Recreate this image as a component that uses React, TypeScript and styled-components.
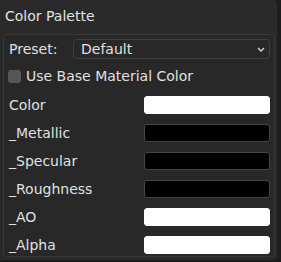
import React from "react";
import styled, { createGlobalStyle } from "styled-components";

const Global = createGlobalStyle`
  html, body { margin: 0; padding: 0; background: #1d1d1d; }
  body { font-family: "DejaVu Sans", "Liberation Sans", sans-serif; font-size: 14px; }
`;

const Panel = styled.div`
  width: 277px;
  height: 260px;
  box-sizing: border-box;
  background: #2a2a2a;
  border-radius: 0 4px 4px 0;
  display: flex;
  flex-direction: column;
  padding: 0 2px 0 3px;
`;

const Title = styled.div`
  height: 34px;
  box-sizing: border-box;
  padding: 6px 0 0 2px;
  color: #e2e2e2;
  line-height: 20px;
`;

const Box = styled.div`
  box-sizing: border-box;
  height: 223px;
  border: 1px solid #383838;
  border-radius: 4px;
  background: #282828;
  padding: 4px 4px 0 5px;
  display: flex;
  flex-direction: column;
`;

const SelectRow = styled.div`
  height: 20px;
  display: flex;
  align-items: center;
`;

const Label = styled.div`
  color: #e0e0e0;
  line-height: 18px;
  white-space: nowrap;
`;

const PresetLabel = styled(Label)`
  width: 64px;
`;

const Select = styled.div`
  flex: 1;
  height: 20px;
  box-sizing: border-box;
  border: 1px solid #3e3e3e;
  border-radius: 4px;
  background: #282828;
  display: flex;
  align-items: center;
  justify-content: space-between;
  padding: 0 4px 0 7px;
  color: #e0e0e0;
`;

const CheckRow = styled.div`
  height: 20px;
  margin-top: 7px;
  display: flex;
  align-items: center;
  gap: 5px;
  margin-left: -1px;
`;

const CheckBox = styled.div`
  width: 13px;
  height: 13px;
  border-radius: 3px;
  background: #565656;
`;

const List = styled.div`
  margin-top: 10px;
  display: flex;
  flex-direction: column;
  gap: 10px;
`;

const Row = styled.div`
  height: 18px;
  display: flex;
  align-items: center;
  justify-content: space-between;
`;

const Swatch = styled.div<{ $c: string }>`
  width: 126px;
  height: 18px;
  box-sizing: border-box;
  border-radius: 3px;
  background: ${(p) => p.$c};
  border: 1px solid ${(p) => (p.$c === "#000000" ? "#464646" : p.$c)};
`;

const rows: [string, string][] = [
  ["Color", "#ffffff"],
  ["_Metallic", "#000000"],
  ["_Specular", "#000000"],
  ["_Roughness", "#000000"],
  ["_AO", "#ffffff"],
  ["_Alpha", "#ffffff"],
];

export default function App() {
  return (
    <>
      <Global />
      <Panel>
        <Title>Color Palette</Title>
        <Box>
          <SelectRow>
            <PresetLabel>Preset:</PresetLabel>
            <Select>
              <span>Default</span>
              <svg width="8" height="5" viewBox="0 0 8 5">
                <path d="M1 1 L4 4 L7 1" stroke="#d8d8d8" strokeWidth="1.3" fill="none" />
              </svg>
            </Select>
          </SelectRow>
          <CheckRow>
            <CheckBox />
            <Label>Use Base Material Color</Label>
          </CheckRow>
          <List>
            {rows.map(([n, c]) => (
              <Row key={n}>
                <Label>{n}</Label>
                <Swatch $c={c} />
              </Row>
            ))}
          </List>
        </Box>
      </Panel>
    </>
  );
}
